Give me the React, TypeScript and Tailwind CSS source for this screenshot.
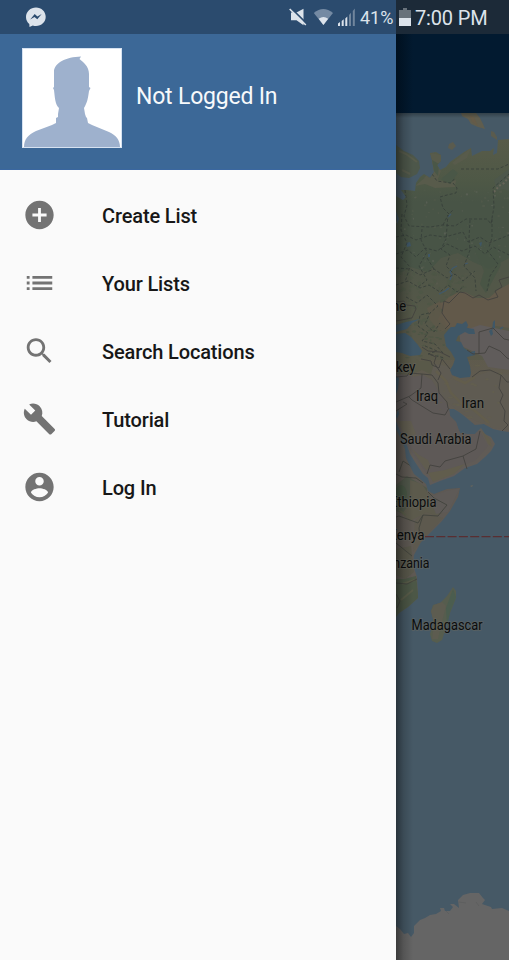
import React from "react";

const menu = [
  { label: "Create List", d: "M12 2C6.48 2 2 6.48 2 12s4.48 10 10 10 10-4.48 10-10S17.52 2 12 2zm5 11h-4v4h-2v-4H7v-2h4V7h2v4h4v2z" },
  { label: "Your Lists", d: "M3 13h2v-2H3v2zm0 4h2v-2H3v2zm0-8h2V7H3v2zm4 4h14v-2H7v2zm0 4h14v-2H7v2zM7 7v2h14V7H7z" },
  { label: "Search Locations", d: "M15.5 14h-.79l-.28-.27C15.41 12.59 16 11.11 16 9.5 16 5.91 13.09 3 9.5 3S3 5.91 3 9.5 5.91 16 9.5 16c1.61 0 3.09-.59 4.23-1.57l.27.28v.79l5 4.99L20.49 19l-4.99-5zm-6 0C7.01 14 5 11.99 5 9.5S7.01 5 9.5 5 14 7.01 14 9.5 11.99 14 9.5 14z" },
  { label: "Tutorial", d: "M22.7 19l-9.1-9.1c.9-2.3.4-5-1.5-6.9-2-2-5-2.4-7.4-1.3L9 6 6 9 1.6 4.7C.4 7.1.9 10.1 2.9 12.1c1.9 1.9 4.6 2.4 6.9 1.5l9.1 9.1c.4.4 1 .4 1.4 0l2.3-2.3c.5-.4.5-1.1.1-1.4z" },
  { label: "Log In", d: "M12 2C6.48 2 2 6.48 2 12s4.48 10 10 10 10-4.48 10-10S17.52 2 12 2zm0 3c1.66 0 3 1.34 3 3s-1.34 3-3 3-3-1.34-3-3 1.34-3 3-3zm0 14.2c-2.5 0-4.71-1.28-6-3.22.03-1.99 4-3.08 6-3.08 1.99 0 5.97 1.09 6 3.08-1.29 1.94-3.5 3.22-6 3.22z" },
];

// Small deterministic generator for the terrain speckles.
function speckles(count: number, seed: number, x0: number, y0: number, w: number, h: number) {
  let s = seed;
  const next = () => {
    s = (s * 16807) % 2147483647;
    return s / 2147483647;
  };
  return Array.from({ length: count }, () => ({
    x: x0 + next() * w,
    y: y0 + next() * h,
    rx: 0.4 + next() * 1.2,
    ry: 0.4 + next() * 0.9,
  }));
}

const pale = speckles(110, 71, 396, 190, 113, 95);
const green = speckles(80, 913, 396, 270, 70, 55);
const ochre = speckles(24, 417, 440, 362, 69, 56);
const caucasus = speckles(36, 555, 407, 325, 38, 35);

const labels = [
  { t: "ne", x: 392, y: 311, w: 14 },
  { t: "key", x: 396, y: 371.5, w: 19.5 },
  { t: "Iraq", x: 416, y: 401, w: 22 },
  { t: "Iran", x: 461.5, y: 408, w: 22.5 },
  { t: "Saudi Arabia", x: 400, y: 444, w: 71.5 },
  { t: "Ethiopia", x: 390, y: 507, w: 46.5 },
  { t: "Kenya", x: 388.5, y: 540, w: 36 },
  { t: "Tanzania", x: 380, y: 567.5, w: 49.5 },
  { t: "Madagascar", x: 411.5, y: 630, w: 71 },
];

const EURASIA =
  "M396 196 403 200 406 197 401 190 407 190 415 191 416 183 420 177 424 174 430 178 434 172 432 160 430 153 436 152 441 155 441 161 437 165 440 170 446 167 450 162 457 157 464 152 471 148 472 156 482 151 490 151 494 148 493 155 497 153 498 140 509 139V432L502 431 493 429 484 424 475 425 463 415 459 412 454 409 449 409 450 416 456 422 458 428 460 433 467 434 475 434 481 428 485 434 491 437 495 444 491 451 485 457 477 464 465 468 454 476 440 481 430 485 428 478 423 474 415 462 410 454 407 445 402 435 396 421Z";
const AFRICA =
  "M396 429 402 441 405 449 406 458 414 474 419 478 426 484 428 491 434 494 447 489 460 488 458 497 450 511 442 521 430 533 421 542 414 555 413 565 417 577 418 598 408 607 399 613 396 617Z";

function WorldMap() {
  return (
    <svg viewBox="396 113 113 847" className="block h-[847px] w-[113px] shrink-0" fontFamily="Roboto, sans-serif">
      <defs>
        <clipPath id="asia"><path d={EURASIA} /></clipPath>
        <clipPath id="africa"><path d={AFRICA} /></clipPath>
        <linearGradient id="terrain" x1="0" y1="140" x2="0" y2="485" gradientUnits="userSpaceOnUse">
          <stop offset="0" stopColor="#585b49" />
          <stop offset=".12" stopColor="#4e5846" />
          <stop offset=".18" stopColor="#485446" />
          <stop offset=".38" stopColor="#485446" />
          <stop offset=".5" stopColor="#525748" />
          <stop offset=".62" stopColor="#5e5a4b" />
          <stop offset=".7" stopColor="#605b51" />
          <stop offset="1" stopColor="#605b58" />
        </linearGradient>
        <linearGradient id="drawerShade">
          <stop offset="0" stopOpacity=".42" />
          <stop offset=".45" stopOpacity=".16" />
          <stop offset="1" stopOpacity="0" />
        </linearGradient>
        <linearGradient id="barShade" x1="0" x2="0" y1="0" y2="1">
          <stop offset="0" stopOpacity=".28" />
          <stop offset="1" stopOpacity="0" />
        </linearGradient>
      </defs>
      <rect x="396" y="113" width="113" height="847" fill="#465966" />

      {/* arctic islands and Scandinavia */}
      <path d="M461 113H476L480 118 483 124 485 129 478 127 471 124 468 119 462 116Z" fill="#5f5d4e" />
      <path d="M469 115 474 117 478 126 472 122Z" fill="#655b48" />
      <path d="M491 131 494 132 497 137 497 140 491 136ZM449 144 453 142 456 146 452 150 448 148Z" fill="#5a5b4e" />
      <path d="M396 145 404 151 413 155 419 161 420 168 417 174 409 178 401 177 396 173Z" fill="#4d574a" />
      <path d="M399 151 406 154 417 162M402 170 410 174" stroke="#585c4c" strokeWidth="2" fill="none" />

      <path d={EURASIA} fill="url(#terrain)" />
      <g clipPath="url(#asia)">
        <path d="M430 153 441 155 441 161 437 165 441 171 436 184 424 178 432 170ZM452 163 471 148 467 158 455 165ZM415 186 427 176 448 183 456 180 455 187 435 188 425 184Z" fill="#585b4b" />
        <path d="M432 160 439 164 438 176 434 171ZM441 179 453 169 458 173 450 184Z" fill="#4a5747" />
        <path d="M494 180 509 169V191L503 189 497 191Z" fill="#4d574b" />
        <path d="M494 192 499 186 504 183 509 177" stroke="#666458" strokeWidth="2" strokeDasharray="2 2" fill="none" />
        {pale.map((p, i) => <ellipse key={i} cx={p.x} cy={p.y} rx={p.rx} ry={p.ry} fill={i % 3 ? "#555c4d" : "#62655c"} opacity=".6" />)}
        <path d="M396 276 410 267 428 272 441 258 458 253 473 262 489 269 509 258V360H396Z" fill="#57594a" opacity=".6" />
        {green.map((p, i) => <ellipse key={i} cx={p.x} cy={p.y} rx={p.rx * 2} ry={p.ry * 1.7} fill="#4c5746" opacity=".6" />)}
        <path d="M475 250 498 250 501 265 493 280 486 293 480 284 484 271Z" fill="#485545" opacity=".85" />
        <path d="M434 304 444 302 449 297 457 293 465 292 476 298 489 298 498 290 509 284V328L496 326 480 332 474 330 459 325 447 329 438 319 443 310Z" fill="#62594a" />
        <path d="M427 308 440 301 442 315 448 329 440 332 430 320Z" fill="#5f5849" opacity=".75" />
        <path d="M459 332 480 325 509 331V370L488 367 482 356 470 350 461 346Z" fill="#605c5b" />
        <path d="M396 372 408 370 413 377 423 375 434 381 440 391 447 405 454 417 476 425 482 435 488 446 475 461 440 472 426 473 400 435 396 420Z" fill="#5e5957" />
        <path d="M396 355 410 356 420 361 428 360 437 367 432 375 422 370 410 375 396 374Z" fill="#595949" />
        <path d="M434 364 447 366 455 377 476 376 491 371 509 375V430L493 428 476 421 463 414 448 403 438 390 430 377Z" fill="#5f5b52" />
        {ochre.map((p, i) => <ellipse key={i} cx={p.x} cy={p.y} rx={p.rx * 2} ry={p.ry} fill="#64614d" opacity=".55" />)}
        {caucasus.map((p, i) => <ellipse key={i} cx={p.x} cy={p.y} rx={p.rx * 1.6} ry={p.ry} fill="#495644" opacity=".75" />)}
        <path d="M436 371 446 381 451 393 461 403 474 410 489 423M454 378 465 383 475 377" stroke="#645e4a" strokeWidth="2.5" fill="none" opacity=".7" />
        <path d="M398 421 411 421 416 434 406 440ZM411 448 419 460 426 470 431 468 428 460 419 455Z" fill="#605c4f" />
        <path d="M428 473 445 470 465 464 454 474 433 482ZM482 431 490 439 492 447 488 444Z" fill="#615d4d" />
      </g>

      {/* seas and lakes */}
      <g fill="#3f5767">
        <path d="M396 325 406 322 420 319 412 323 407 329 396 332ZM396 334 405 333 411 337 418 345 422 351 420 355 410 356 402 353 396 352Z" />
        <path d="M444 335 448 330 451 327 455 327 457 323 462 324 466 321 468 325 467 328 474 329 475 334 469 334 465 332 458 336 456 341 461 342 464 348 470 352 475 351 475 355 467 357 470 366 471 373 470 377 460 378 452 375 450 370 453 365 455 359 451 352 446 346Z" />
        <path d="M489 331 492 329 493 334 491 336ZM493 322 495 320 495 328 492 330ZM406 243 410 242 411 246 407 247ZM479 243 482 242 481 247ZM396 211 399 219 397 224ZM428 254 430 254 430 257 428 257Z" />
        <path d="M396 376 399 378 398 389 396 394ZM398 409 399 414 397 419 396 416Z" />
      </g>
      <path d="M450 280 452 275 450 272 453 268 457 266M439 294 445 291 449 288M448 217 451 214M465 264 468 263M500 329 503 327" stroke="#40586b" strokeWidth="1.2" fill="none" />

      {/* administrative boundaries */}
      <g clipPath="url(#asia)" stroke="#353d39" strokeWidth=".9" fill="none" strokeDasharray="3 2" opacity=".85">
        <path d="M405 190 407 205 404 216 409 226 430 227 443 225 455 226 466 219 487 219 491 224 494 207 493 188 509 174M461 169H498L509 164M432 174 437 181 451 183 455 178M453 183 457 188 456 193 447 195 440 197 443 208 449 214 453 210M443 225 448 215 446 239 441 249 450 255 446 266 455 275M396 237 406 235 416 240 430 235 445 237 463 232 468 242 480 237 489 243 509 235M396 254 408 250 416 257 425 248 437 251 447 244 462 251 475 246 485 254 493 247 509 255M402 214 401 230 407 243 401 257 410 267 405 282M422 229 421 240 427 252 419 266 427 280 417 288M470 220 469 238 470 250 464 266 475 278 476 291M492 219 492 238 489 247M487 250 498 264 490 276 487 291M396 268 410 269 420 275 434 269 447 278 455 274 463 281 475 271M396 285 408 281 420 288 429 285 440 292 448 285 457 292 464 286M406 297 417 303 427 295 438 306 430 313 425 324 434 332 440 323M434 269 427 258M429 313 420 315 418 326 428 333 422 341 435 344 443 353M425 346 437 351 428 354 445 358" />
      </g>
      <g stroke="#43423e" strokeWidth=".9" fill="none">
        <path d="M396 302 404 301 406 305 415 306 416 309 412 318 396 321M445 329 450 324 446 319 442 313 444 301 449 303 460 292 465 293 473 298 479 295 488 300 498 297 495 291 502 287 499 280 509 277M479 354V332L493 328 504 339 509 340M467 350 473 354 485 353 489 346 500 351 507 358 509 359M422 347 428 351 440 352 450 357M429 354 436 357 434 363 441 373 438 380M421 359 431 361 432 365 439 368 442 359 450 369M472 377 480 371 490 370 501 375 507 382 509 382M396 377 407 376 409 373 422 374 432 375 438 383 439 393 447 402 448 408M422 374 421 388 410 396 396 402M409 397 412 400 433 413 445 415 449 408M396 411 407 404 403 402M501 375 499 388 503 395 500 402 505 411 504 421 508 425 502 431M480 431 478 440 476 449 463 456 445 461 440 467 430 465 427 474M463 456 467 469" />
      </g>

      {/* east Africa */}
      <path d={AFRICA} fill="#5e5953" />
      <g clipPath="url(#africa)">
        <path d="M396 485 407 476 417 482 427 488 427 510 414 518 396 511Z" fill="#50574a" />
        <path d="M410 480 422 484 429 495 445 506 450 509 436 516 424 514 410 521 402 514 410 503Z" fill="#5c5a4c" />
        <path d="M429 497 446 491 460 488 448 512 436 514Z" fill="#5e5a57" />
        <path d="M415 520 426 512 443 518 425 537 413 552Z" fill="#5d594e" />
        <path d="M396 579 404 579 416 576 419 600 396 620Z" fill="#4c5746" />
        <path d="M396 549 411 546 414 572 405 579 396 575Z" fill="#59584b" />
        <ellipse cx="401" cy="494" rx="6" ry="9" fill="#485745" />
        <path d="M402 584 415 580M401 600 413 590M399 510 406 515M407 560 412 569" stroke="#595c49" strokeWidth="2" />
        <path d="M396 474 402 477 416 478 423 483M414 468 403 461 399 472M428 492 434 498 447 505 438 516 423 515 418 523 410 520 399 516 396 517M423 515 419 528 420 539M396 543 412 556M396 583 407 584 417 579M396 594 400 601 397 608" stroke="#42443d" strokeWidth=".9" fill="none" />
      </g>
      <path d="M453 587 456 591 456 598 450 613 445 631 442 640 437 643 432 641 430 634 434 622 431 611 433 605 440 603 447 596Z" fill="#565d4e" />
      <path d="M431 611 434 605 442 602 446 606 442 622 438 639 432 639 434 624Z" fill="#5d5c50" />
      <path d="M453 589 456 597 450 612 447 625 446 608Z" fill="#4b5d4f" />
      <path d="M470 486 473 485 472 487Z" fill="#67665c" />

      <path d="M425 536.5H509" stroke="#592e31" strokeWidth="1.25" strokeDasharray="9 2.300" />
      <path d="M396 926 400 929 404 934 408 933 411 937 414 933 414 926 420 920 425 918 430 915 436 914 441 911 440 908 444 908 445 911 450 911 453 907 450 904 454 904 459 908 458 900 463 895 470 893 479 893 483 898 485 900 482 904 491 907 492 909 502 908 509 911V960H396Z" fill="#656565" />
      <path d="M459 902 466 903M476 902 479 906M446 911 449 914" stroke="#5e5f5f" fill="none" />

      <g fontSize="14" fill="#0b0c0c" stroke="#65665f" strokeWidth="2" strokeLinejoin="round" paintOrder="stroke" strokeOpacity=".55">
        {labels.map((l) => (
          <text key={l.t} x={l.x} y={l.y} textLength={l.w} lengthAdjust="spacingAndGlyphs">{l.t}</text>
        ))}
      </g>
      <rect x="396" y="113" width="17" height="847" fill="url(#drawerShade)" />
      <rect x="396" y="113" width="113" height="5" fill="url(#barShade)" />
    </svg>
  );
}

function StatusIcons() {
  return (
    <svg width="76" height="34" viewBox="284 0 76 34" className="shrink-0" fill="#dce3eb">
      <path d="M291 12.500H296.500L303.500 8.700V25.300L296.500 20.300H291Z" />
      <path d="M290.700 7.900 307 23.900" stroke="#2b4b6e" strokeWidth="1.8" />
      <path d="M289.700 9 305.800 25" stroke="#dce3eb" strokeWidth="1.600" />
      <path d="M313.800 13Q323.300 5 333 13L323.400 25Z" fill="#748aa3" />
      <path d="M318.700 18.800Q323.400 15.300 328.200 18.800L323.400 25Z" />
      <path d="M338 23.500 340 22V26H338ZM341.700 21 343.700 19.200V26H341.700ZM345.300 18.400 347.300 16.600V26H345.300Z" />
      <path d="M349 15 351 12.800V26H349ZM352.800 11 354.800 8.500V26H352.800Z" fill="#71869d" />
    </svg>
  );
}

export default function App() {
  return (
    <div className="relative flex h-[960px] w-[509px] overflow-hidden bg-[#fafafa] font-[Roboto,sans-serif]">
      <aside className="flex w-[396px] shrink-0 flex-col">
        <div className="h-[34px] bg-[#2b4b6e]" />
        <header className="flex h-[136px] border-b border-[#3a67a0] bg-[#3c6897] pl-[22px] pt-[14px]">
          <svg width="100" height="100" viewBox="0 0 100 100" className="shrink-0">
            <rect x=".5" y=".5" width="99" height="99" fill="#fff" stroke="#d6e2f1" />
            <path d="M2 99C2 91 6 87 14 83L30 77 34 75V70L36 69V66L37 60C33 56 33 50 32 42L31 40 32 39V24C32 15 44 9 59 8.500L57.500 11C61 14 67 18 67 26V39L68.500 40 67 43C66 51 65 55 62 60L63 66 64 69 65 70 66 75 70 77 87 84C94 87 98 92 98 99Z" fill="#9eb1cd" />
          </svg>
          <span className="ml-[14px] mt-[31px] h-9 whitespace-nowrap text-[23px] leading-9 tracking-[-0.2px] text-[#f7f9fb]">Not Logged In</span>
        </header>
        <nav className="flex flex-col pt-[11px]">
          {menu.map((item) => (
            <a key={item.label} className="flex h-[68px] items-center pl-[22px]">
              <svg width="35" height="34" viewBox="0 0 24 24" fill="#737373" className="shrink-0"><path d={item.d} /></svg>
              <span className="ml-[45px] mt-px whitespace-nowrap text-[20px] font-medium leading-6 tracking-[-0.14px] text-[#171717]">{item.label}</span>
            </a>
          ))}
        </nav>
      </aside>
      <main className="flex w-[113px] shrink-0 flex-col">
        <div className="h-[34px] bg-[#1c2a38]" />
        <div className="h-[79px] bg-gradient-to-r from-[#00101f] to-[#021a30] to-[15%]" />
        <WorldMap />
      </main>
      <div className="absolute inset-x-0 top-0 flex h-[34px] items-center text-[#dce3eb]">
        <svg width="22" height="34" viewBox="25 0 22 34" className="ml-[25px] shrink-0">
          <path d="M36 7.400C30.500 7.400 26 11.500 26 17C26 20.100 27.400 22.500 29.300 24L29.500 27 32.800 25.500Q34.300 26 36 26C41.500 26 45.700 22 45.700 16.800C45.700 11.500 41.500 7.400 36 7.400Z" fill="#dce3eb" />
          <path d="M30.200 19.600 34.700 14.100 37.400 16.500 41.700 14.100 37.300 19.300 34.500 16.900Z" fill="#2b4b6e" />
        </svg>
        <div className="ml-[237px] flex items-center">
          <StatusIcons />
          <span className="mt-px w-[38px] whitespace-nowrap text-[18px] leading-5">41%</span>
          <svg width="15" height="34" viewBox="398 0 15 34" className="shrink-0">
            <path d="M403 8H407V10H411V26H399V10H403Z" fill="#68727b" /><path d="M399 18H411V26H399Z" fill="#dce3eb" />
          </svg>
          <span className="ml-[2px] mt-px whitespace-nowrap text-[20px] leading-5 tracking-[-0.15px]">7:00 PM</span>
        </div>
      </div>
    </div>
  );
}
